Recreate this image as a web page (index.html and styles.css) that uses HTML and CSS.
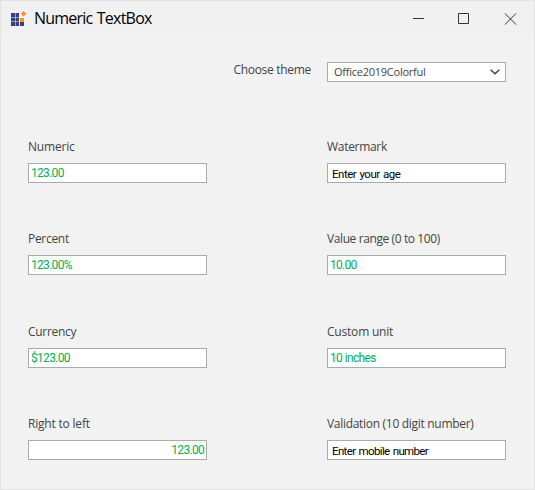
FILE: index.html
```html
<!DOCTYPE html>
<html lang="en">
<head>
<meta charset="utf-8">
<title>Numeric TextBox</title>
<link rel="stylesheet" href="styles.css">
</head>
<body>
<div class="window">
  <header class="titlebar">
    <svg class="logo" width="16" height="16" viewBox="0 0 16 16">
      <path fill="#36417d" d="M0 2h4v4H0zM4.500 2H8v4H4.500zM0 6.500h4v4H0zM4.500 6.500H8v4H4.500zM0 11h4v4H0zM4.500 11H8v4H4.500zM9 11h4v4H9z"/>
      <path fill="#f59331" d="M9 7h4v4H9zM12.500 0 15.500 2.700 12.500 5.500 9.700 2.700z"/>
    </svg>
    <h1 class="title">Numeric TextBox</h1>
    <svg class="controls" width="106" height="12" viewBox="0 0 106 12" fill="none" stroke="#333">
      <path d="M0 5.500h11M45.500.500h10v10h-10z"/>
      <path d="M92 .500l11 11M103 .500l-11 11"/>
    </svg>
  </header>
  <main>
    <div class="theme-row">
      <span class="label">Choose theme</span>
      <div class="box select"><span>Office2019Colorful</span>
        <svg width="10" height="6" viewBox="0 0 10 6" fill="none" stroke="#444" stroke-width="1.500"><path d="M.7.700 5 4.700 9.300.700"/></svg>
      </div>
    </div>
    <div class="grid">
      <div class="field"><span class="label wide">Numeric</span><div class="box value"><span>123.00</span></div></div>
      <div class="field"><span class="label">Watermark</span><div class="box hint"><span>Enter your age</span></div></div>
      <div class="field"><span class="label">Percent</span><div class="box value"><span>123.00%</span></div></div>
      <div class="field"><span class="label narrow">Value range (0 to 100)</span><div class="box value"><span>10.00</span></div></div>
      <div class="field"><span class="label">Currency</span><div class="box value"><span>$123.00</span></div></div>
      <div class="field"><span class="label wide">Custom unit</span><div class="box value"><span>10 inches</span></div></div>
      <div class="field"><span class="label wide">Right to left</span><div class="box value rtl"><span>123.00</span></div></div>
      <div class="field"><span class="label">Validation (10 digit number)</span><div class="box hint tight"><span>Enter mobile number</span></div></div>
    </div>
  </main>
</div>
</body>
</html>
```
FILE: styles.css
```css
* { box-sizing: border-box; }
body { margin: 0; background: #f2f2f2; }
.window { width: 535px; height: 490px; border: 1px solid #e3e3e3; background: #f2f2f2; font-family: "Open Sans", sans-serif; overflow: hidden; }
.titlebar { height: 36px; display: flex; align-items: center; padding: 0 15px 0 10px; background: #f1f1f1; }
.title { margin: -3px auto 0 7px; font-size: 16px; line-height: 20px; font-weight: 400; color: #000; letter-spacing: -.78px; word-spacing: 1px; }
.controls { flex: none; }
.theme-row { display: flex; justify-content: flex-end; padding: 24px 28px 0 0; height: 100px; }
.label { font-size: 12px; line-height: 17px; color: #444; letter-spacing: -.3px; white-space: nowrap; }
.label.wide { letter-spacing: -.2px; }
.label.narrow { letter-spacing: -.4px; }
.theme-row .label { margin: 0 16px 0 0; }
.box { width: 179px; height: 20px; border: 1px solid #ababab; background: #fff; display: flex; align-items: center; padding: 0 2px; font: 12px/16px Roboto, sans-serif; letter-spacing: -.7px; word-spacing: .5px; white-space: pre; }
.select { justify-content: space-between; padding: 0 5px 0 6px; font: 11px/16px "Open Sans", sans-serif; letter-spacing: -.25px; color: #444; margin-top: 1px; }
.value { color: #00b050; }
.hint { color: #000; padding: 2px 0 0 4px; font-size: 11.5px; letter-spacing: -.5px; word-spacing: 1px; }
.tight { letter-spacing: -.65px; }
.rtl { justify-content: flex-end; }
.grid { display: grid; grid-template-columns: 179px 179px; column-gap: 120px; grid-template-rows: 92px 93px 92px 60px; padding-left: 27px; }
.field { display: flex; flex-direction: column; gap: 8px; }
.field .label { padding-top: 1px; line-height: 17px; }
```
